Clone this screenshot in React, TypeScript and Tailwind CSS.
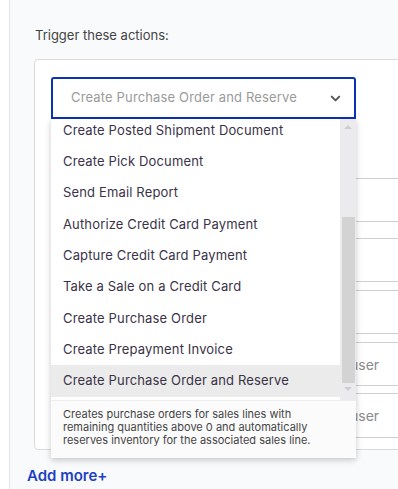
import { ChevronDown } from 'lucide-react';

const actions = [
  'Create Posted Shipment Document',
  'Create Pick Document',
  'Send Email Report',
  'Authorize Credit Card Payment',
  'Capture Credit Card Payment',
  'Take a Sale on a Credit Card',
  'Create Purchase Order',
  'Create Prepayment Invoice',
  'Create Purchase Order and Reserve',
];

const selected = 'Create Purchase Order and Reserve';

function ActionDropdown() {
  return (
    <div className="absolute left-[16px] top-[59px] z-10 w-[305px] bg-white shadow-[0_2px_6px_rgba(0,0,0,0.22)]">
      <div className="flex h-[281px]">
        <div className="flex-1 overflow-hidden">
          <div className="-mt-[4px]">
            {actions.map((a) => (
              <div
                key={a}
                className={`flex h-[31.3px] items-center pl-[12px] text-[13px] tracking-[0.15px] text-[#3a3347] ${
                  a === selected ? 'bg-[#ebebeb]' : ''
                }`}
              >
                {a}
              </div>
            ))}
          </div>
        </div>
        {/* scrollbar */}
        <div className="flex w-[16px] flex-col items-center bg-[#ebebed]">
          <div className="mt-[6px] h-0 w-0 border-x-[4px] border-b-[4px] border-x-transparent border-b-[#cfcfd2]" />
          <div className="mt-[88px] h-[166px] w-[13px] bg-[#d3d3d3]" />
          <div className="mt-[4px] h-0 w-0 border-x-[4px] border-t-[4px] border-x-transparent border-t-[#cfcfd2]" />
        </div>
      </div>
      <div className="border-t border-[#eeeeee] bg-[#fbfbfc] px-[12px] pb-[11px] pt-[7px] text-[11px] leading-[13px] text-[#444]">
        Creates purchase orders for sales lines with remaining quantities above 0 and automatically
        reserves inventory for the associated sales line.
      </div>
    </div>
  );
}

export default function App() {
  return (
    <div className="h-[489px] w-[398px] overflow-hidden bg-white font-['Inter',sans-serif]">
      <div className="ml-[9px] h-full border-l border-[#e6e6e6] bg-[#f9fafb] pl-[24px] pt-[27px]">
        <p className="ml-px text-[13px] leading-[16px] text-[#444]">Trigger these actions:</p>

        <div className="relative mt-[16px] h-[391px] w-[420px] rounded border border-[#dadada] bg-white px-4 pt-[17px]">
          <div className="flex h-[42px] w-[305px] items-center justify-between rounded-t-[3px] border-2 border-[#0b32b5] pl-[18px] pr-[11px]">
            <span className="text-[13px] tracking-[0.15px] text-[#9a9a9a]">Create Purchase Order and Reserve</span>
            <ChevronDown className="h-[15px] w-[15px] text-[#555]" strokeWidth={3.2} />
          </div>

          <div className="mt-[59px] h-[44px] border-y border-[#cfcfcf]" />
          <div className="mt-[16px] h-[44px] border-y border-[#cfcfcf]" />
          <div className="mt-[8px] h-[44px] border-y border-[#cfcfcf]" />
          <div className="mt-[8px] flex h-[44px] items-center border-y border-[#cfcfcf] pl-[299px] text-[14px] text-[#8a8a8a]">
            user
          </div>
          <div className="mt-[7px] flex h-[45px] items-center border-y border-[#cfcfcf] pl-[299px] text-[14px] text-[#8a8a8a]">
            user
          </div>

          <ActionDropdown />
        </div>

        <button className="-ml-[7px] mt-[15px] text-[15px] font-semibold text-[#1c42c2]">Add more+</button>
      </div>
    </div>
  );
}
